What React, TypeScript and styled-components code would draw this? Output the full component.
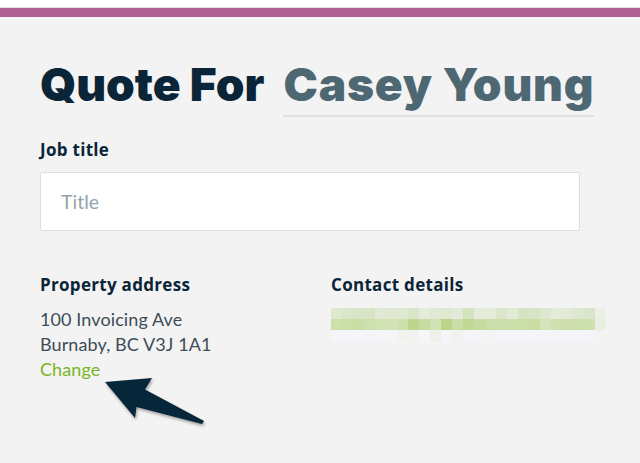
import React from "react";
import styled, { createGlobalStyle } from "styled-components";

const Global = createGlobalStyle`
  html, body { margin: 0; padding: 0; background: #ffffff; }
  body { font-family: "Lato", "Liberation Sans", sans-serif; }
  * { box-sizing: border-box; }
`;

const Page = styled.div`
  padding-top: 7px;
  background: #ffffff;
  width: 640px;
  height: 463px;
  overflow: hidden;
`;

const Sheet = styled.div`
  position: relative;
  border-top: 1px solid #e2dde0;
  height: 456px;
  background: #f3f3f3;
`;

const Band = styled.div`
  height: 9px;
  background: #b06092;
`;

const Content = styled.div`
  padding: 34px 0 0 40px;
`;

const HeadingRow = styled.div`
  display: flex;
  align-items: flex-end;
  gap: 19px;
  height: 66px;
`;

const Heading = styled.h1`
  margin: 0;
  font-family: "Inter", "Liberation Sans", sans-serif;
  font-weight: 900;
  font-size: 46px;
  letter-spacing: 0px;
  line-height: 56px;
  color: #0a2537;
  padding-bottom: 5px;
`;

const NameField = styled.div`
  width: 311px;
  border-bottom: 2px solid #e1e1e1;
  font-family: "Inter", "Liberation Sans", sans-serif;
  font-weight: 900;
  font-size: 46px;
  letter-spacing: 0.8px;
  line-height: 56px;
  color: #4d6773;
  padding-bottom: 3px;
  white-space: nowrap;
`;

const Label = styled.div`
  font-family: "Open Sans", "Lato", sans-serif;
  font-weight: 700;
  font-size: 17px;
  letter-spacing: 0.3px;
  line-height: 22px;
  color: #0a2537;
`;

const JobSection = styled.div`
  margin-top: 22px;
`;

const Input = styled.div`
  margin-top: 11px;
  width: 540px;
  height: 59px;
  background: #ffffff;
  border: 1px solid #dedede;
  border-radius: 2px;
  padding: 0 0 0 20px;
  display: flex;
  align-items: center;
  font-size: 19.5px;
  color: #94a3ac;
`;

const Columns = styled.div`
  margin-top: 43px;
  display: grid;
  grid-template-columns: 291px 291px;
`;

const Column = styled.div`
  display: flex;
  flex-direction: column;
`;

const Lines = styled.div`
  margin-top: 11px;
  font-size: 18px;
  letter-spacing: 0.1px;
  line-height: 25px;
  color: #3e4c56;
`;

const Link = styled.div`
  color: #7ab523;
`;

const Blur = styled.svg`
  margin-top: 12px;
  display: block;
`;

const ArrowSvg = styled.svg`
  position: absolute;
  left: 0;
  top: -8px;
  pointer-events: none;
  filter: drop-shadow(1px 2px 1.5px rgba(0, 0, 0, 0.35));
`;

const row1 = ["#dfe9d0","#dbe6cb","#dae5c8","#d8e4c4","#e1e9d4","#e0e8d2","#dfe8d1","#d9e5c8","#e6ecdc","#e1e9d4","#dfe8d1","#e3eada","#d3e3bd","#e6ecdc","#e4ebd9","#dbe6cb","#e2ead6","#d7e4c4","#d8e4c5","#dde7cd","#e4ebd9","#e2e9d6","#dee7cf","#d9e5c8","#ecefe6"];
const row2 = ["#cde0ab","#cadeaa","#c9dda5","#cfe0b0","#d1e2b3","#d3e3b7","#cfe0af","#bcd68d","#c7dca2","#d1e2b4","#bad58a","#cadea8","#c0d896","#c6dba0","#cbdeaa","#cbdeaa","#cbdeab","#cadea8","#c8dca4","#d6e4bc","#d0e1b1","#cfe0ae","#cde0ab","#cee0ae","#e9efdf"];
const row3 = ["#f6f5f9","#f5f4f8","#f6f5f9","#f5f4f8","#f6f5f9","#f5f4f8","#f1f2ee","#f2f3f0","#f6f5f9","#eef0ea","#f5f4f8","#f0f2ed","#f5f4f8","#f5f4f8","#f4f4f5","#f5f4f8","#f6f5f9","#f6f5f9","#f5f4f8","#f6f5f9","#f5f4f8","#f6f5f9","#f5f4f8","#f5f4f8","#f3f3f3"];

function Pixelated() {
  const rows = [row1, row2, row3];
  return (
    <Blur width={280} height={34} viewBox="0 0 280 34">
      {rows.map((r, ri) =>
        r.map((c, ci) => (
          <rect key={`${ri}-${ci}`} x={ci * 11} y={ri * 11} width={11} height={11.5} fill={c} />
        ))
      )}
    </Blur>
  );
}

export default function App() {
  return (
    <Page>
      <Global />
      <Sheet>
        <Band />
        <Content>
          <HeadingRow>
            <Heading>Quote For</Heading>
            <NameField>Casey Young</NameField>
          </HeadingRow>
          <JobSection>
            <Label>Job title</Label>
            <Input>Title</Input>
          </JobSection>
          <Columns>
            <Column>
              <Label>Property address</Label>
              <Lines>
                <div>100 Invoicing Ave</div>
                <div>Burnaby, BC V3J 1A1</div>
                <Link>Change</Link>
              </Lines>
            </Column>
            <Column>
              <Label>Contact details</Label>
              <Pixelated />
            </Column>
          </Columns>
        </Content>
        <ArrowSvg width={640} height={463} viewBox="0 0 640 463">
          <polygon
            points="105,382 152,378 145,389.5 204,421 202,424 136.5,407 135,418"
            fill="#06263a"
          />
        </ArrowSvg>
      </Sheet>
    </Page>
  );
}
